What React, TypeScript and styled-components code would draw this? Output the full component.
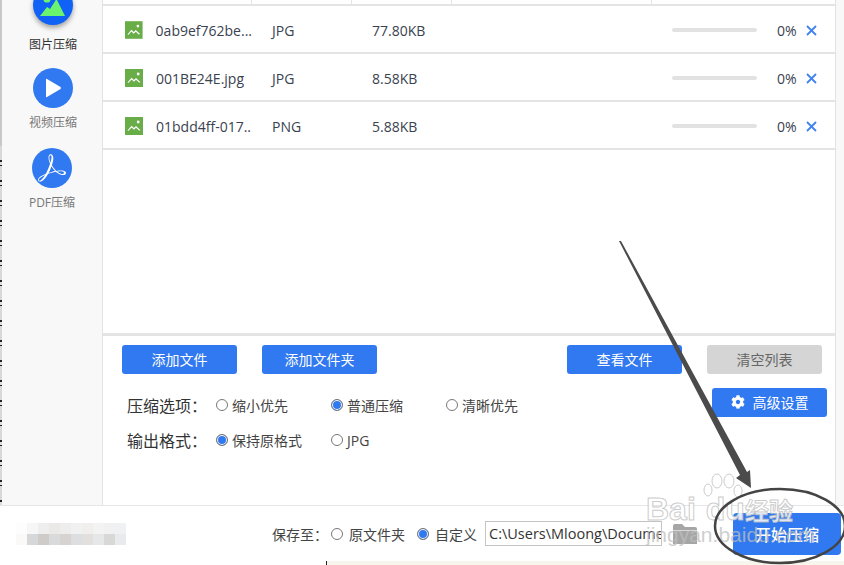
import React from 'react';
import styled, { createGlobalStyle } from 'styled-components';
import { FaCog } from 'react-icons/fa';
import { SiAdobeacrobatreader } from 'react-icons/si';

const GlobalStyle = createGlobalStyle`
  html, body {
    margin: 0;
    padding: 0;
    background: #fff;
  }
  * {
    box-sizing: border-box;
  }
`

const Page = styled.div`
  position: relative;
  display: flex;
  flex-flow: column nowrap;
  width: 844px;
  height: 565px;
  overflow: hidden;
  background: #fff;
  color: #333;
  font-family: "Open Sans", "Noto Sans CJK SC", sans-serif;
  font-size: 14px;
`

const Upper = styled.div`
  display: flex;
  flex: 1 1 auto;
  min-height: 0;
`

const EdgeStrip = styled.div`
  flex: 0 0 2px;
  background:
    linear-gradient(#c8c8c8 0 146px, transparent 146px),
    repeating-linear-gradient(#222 0 2px, #ddd 2px 5px, #222 5px 6px, #d8d8d8 6px 20px);
`

const Sidebar = styled.nav`
  display: flex;
  flex-flow: column nowrap;
  flex: 0 0 100px;
  background: #f8f8f8;
`

const NavItem = styled.div<{ $top: number; $left: number }>`
  display: flex;
  flex-flow: column nowrap;
  align-items: center;
  width: 40px;
  margin-top: ${(p) => p.$top}px;
  margin-left: ${(p) => p.$left}px;
`

const NavCircle = styled.div<{ $active?: boolean }>`
  display: flex;
  justify-content: center;
  align-items: center;
  flex: 0 0 40px;
  width: 40px;
  border-radius: 50%;
  background: ${(p) => (p.$active ? '#0f62f5' : '#3179f0')};
  box-shadow: ${(p) => (p.$active ? '0 3px 5px rgba(0, 0, 0, 0.35)' : 'none')};
  color: #fff;
`

const NavLabel = styled.span<{ $active?: boolean }>`
  margin-top: ${(p) => (p.$active ? 12 : 7)}px;
  font-size: 12px;
  line-height: 16px;
  white-space: nowrap;
  color: ${(p) => (p.$active ? '#333' : '#777')};
`

const Main = styled.main`
  display: flex;
  flex-flow: column nowrap;
  flex: 0 0 734px;
  background: #fff;
  border-left: 1px solid #e2e2e2;
  border-right: 1px solid #e2e2e2;
`

const Gutter = styled.div`
  flex: 1 1 auto;
  background: #f8f8f8;
`

const FileList = styled.section`
  flex: 0 0 336px;
  border-bottom: 3px solid #e4e4e4;
`

const HeaderRow = styled.div`
  display: grid;
  grid-template-columns: 149px 100px 100px 200px 1fr;
  height: 6px;
  border-bottom: 2px solid #e4e4e4;
`

const HeaderCell = styled.div`
  border-right: 1px solid #e4e4e4;
  &:last-child {
    border-right: 0;
  }
`

const FileRow = styled.div`
  display: grid;
  grid-template-columns: 149px 100px 100px 200px 1fr;
  align-items: center;
  height: 48px;
  padding-top: 2px;
  border-bottom: 2px solid #e4e4e4;
  color: #3a4250;
`

const NameCell = styled.div`
  display: flex;
  align-items: center;
  padding-left: 22px;
  gap: 13px;
  white-space: nowrap;
`

const TextCell = styled.div`
  padding-left: 20px;
`

const StatusCell = styled.div`
  grid-column: 5;
  display: flex;
  align-items: center;
  padding-left: 20px;
`

const ProgressTrack = styled.div`
  width: 85px;
  height: 4px;
  margin-right: 20px;
  border-radius: 2px;
  background: #e2e2e2;
`

const Percent = styled.span`
  display: block;
  width: 29px;
`

const Controls = styled.section`
  display: flex;
  flex-flow: column nowrap;
  flex: 1 1 auto;
  padding: 9px 8px 0 19px;
`

const ButtonRow = styled.div`
  display: flex;
  gap: 25px;
  padding-right: 5px;
`

const Spacer = styled.div`
  flex: 1 1 auto;
`

const ActionButton = styled.button<{ $muted?: boolean }>`
  display: flex;
  justify-content: center;
  align-items: center;
  gap: 8px;
  width: 115px;
  height: 29px;
  padding: 0 0 2px;
  border: 0;
  border-radius: 3px;
  background: ${(p) => (p.$muted ? '#d5d5d5' : '#3179f0')};
  color: ${(p) => (p.$muted ? '#666' : '#fff')};
  font: inherit;
`

const OptionsArea = styled.div`
  display: flex;
  justify-content: space-between;
  padding-top: 14px;
`

const OptionsColumn = styled.div`
  display: flex;
  flex-flow: column nowrap;
  gap: 11px;
  padding: 5px 0 0 5px;
`

const OptionRow = styled.div`
  display: flex;
  align-items: center;
  height: 24px;
`

const OptionTitle = styled.span`
  flex: 0 0 89px;
  font-size: 16px;
  color: #333;
`

const RadioItem = styled.label<{ $width?: number; $gap?: number }>`
  display: flex;
  align-items: center;
  gap: ${(p) => p.$gap ?? 4}px;
  width: ${(p) => (p.$width ? `${p.$width}px` : 'auto')};
  color: #444;
  font-size: 14px;
  white-space: nowrap;
`

const RadioDot = styled.span<{ $checked?: boolean }>`
  display: block;
  flex: 0 0 12px;
  width: 12px;
  height: 12px;
  border: 1px solid #777;
  border-radius: 50%;
  background: ${(p) => (p.$checked ? '#3179f0' : '#fff')};
  box-shadow: ${(p) => (p.$checked ? 'inset 0 0 0 1px #fff' : 'none')};
`

const Footer = styled.footer`
  display: flex;
  align-items: center;
  flex: 0 0 56px;
  padding: 0 3px 0 16px;
  background: #fff;
  border-top: 1px solid #e6e6e6;
`

const Mosaic = styled.div`
  display: grid;
  grid-template-columns: repeat(10, 11px);
  grid-auto-rows: 11px;
  margin-top: 1px;
`

const MosaicTile = styled.div<{ $color: string }>`
  background: ${(p) => p.$color};
`

const SaveArea = styled.div`
  display: flex;
  align-items: center;
  margin-left: 146px;
`

const SaveLabel = styled.span`
  margin-right: 3px;
  color: #444;
  font-size: 14px;
`

const PathInput = styled.div`
  width: 177px;
  height: 25px;
  margin-left: 8px;
  padding-left: 3px;
  overflow: hidden;
  border: 1px solid #c4c4c4;
  color: #333;
  font-size: 14.5px;
  line-height: 23px;
  white-space: nowrap;
`

const FolderButton = styled.div`
  display: flex;
  width: 24px;
  margin-left: 11px;
`

const StartButton = styled.button`
  width: 108px;
  height: 42px;
  margin-left: auto;
  padding: 0;
  border: 0;
  border-radius: 4px;
  background: #3179f0;
  color: #fff;
  font: inherit;
  font-size: 16px;
  font-weight: 500;
`

const BottomEdge = styled.div`
  display: flex;
  flex: 0 0 4px;
`

const EdgeWhite = styled.div`
  flex: 0 0 327px;
  background: #fff;
  border-right: 1px solid #222;
`

const EdgeCream = styled.div`
  flex: 1 1 auto;
  background: #f8f5ec;
`

const Annotation = styled.svg`
  position: absolute;
  top: 0;
  left: 0;
  pointer-events: none;
`

const Watermark = styled.div`
  position: absolute;
  top: 492px;
  left: 646px;
  width: 175px;
  pointer-events: none;
  color: rgba(255, 255, 255, 0.85);
  -webkit-text-stroke: 1px rgba(190, 190, 190, 0.8);
  font-family: "Liberation Sans", sans-serif;
  white-space: nowrap;
`

const WatermarkTop = styled.div`
  display: flex;
  align-items: baseline;
  font-size: 32px;
  font-weight: 700;
  line-height: 34px;
`

const WatermarkPad = styled.span`
  margin-left: 10px;
`

const WatermarkCn = styled.span`
  font-family: "Noto Sans CJK SC", sans-serif;
  font-size: 24px;
`

const WatermarkUrl = styled.div`
  font-size: 21px;
  line-height: 16px;
  -webkit-text-stroke: 0;
  color: rgba(190, 190, 190, 0.75);
`

const files = [
  { name: '0ab9ef762be...', type: 'JPG', size: '77.80KB' },
  { name: '001BE24E.jpg', type: 'JPG', size: '8.58KB' },
  { name: '01bdd4ff-017..', type: 'PNG', size: '5.88KB' },
]

const mosaicColors = [
  '#fdfdfd', '#f6f6f6', '#eeeeee', '#ebe9e8', '#ededed', '#f1f1f1', '#f0efee', '#f3f3f3', '#f1f1f1', '#f0f1f2',
  '#fbf9f7', '#d6d7d9', '#cfcbc8', '#d8dadc', '#d6d3d0', '#dcdee0', '#e2e0de', '#e6e7e8', '#d8d8d6', '#e8eaec',
]

function FileIcon() {
  return (
    <svg width="18" height="18" viewBox="0 0 18 18">
      <rect width="18" height="18" fill="#69ad48" />
      <circle cx="13.2" cy="5" r="1.4" fill="#fff" />
      <path d="M2.5 13.5 L6.5 8.8 L9 11 L11 9 L15.5 13.2 L14 13.6 L11 10.8 L9 12.8 L6.5 10.6 L3.6 13.8 Z" fill="#fff" />
    </svg>
  )
}

function CloseIcon() {
  return (
    <svg width="11" height="11" viewBox="0 0 11 11">
      <path d="M1 1 L10 10 M10 1 L1 10" stroke="#3f82f0" strokeWidth="1.8" fill="none" />
    </svg>
  )
}

function App() {
  return (
    <Page>
      <GlobalStyle />
      <Upper>
        <EdgeStrip />
        <Sidebar>
          <NavItem $top={-15} $left={31}>
            <NavCircle $active>
              <svg width="26" height="24" viewBox="0 0 26 24">
                <circle cx="7" cy="6" r="3.6" fill="#6bf56e" />
                <path d="M0 23 L7 14 L10 16 L16.5 6 L25 23 Z" fill="#6bf56e" />
              </svg>
            </NavCircle>
            <NavLabel $active>图片压缩</NavLabel>
          </NavItem>
          <NavItem $top={15} $left={31}>
            <NavCircle>
              <svg width="18" height="20" viewBox="0 0 18 20">
                <path d="M2 1.5 Q2 0.5 3 1 L16.5 9 Q17.5 10 16.5 11 L3 19 Q2 19.5 2 18.5 Z" fill="#fff" />
              </svg>
            </NavCircle>
            <NavLabel>视频压缩</NavLabel>
          </NavItem>
          <NavItem $top={17} $left={30}>
            <NavCircle>
              <SiAdobeacrobatreader size={28} />
            </NavCircle>
            <NavLabel>PDF压缩</NavLabel>
          </NavItem>
        </Sidebar>
        <Main>
          <FileList>
            <HeaderRow>
              <HeaderCell />
              <HeaderCell />
              <HeaderCell />
              <HeaderCell />
              <HeaderCell />
            </HeaderRow>
            {files.map((file) => (
              <FileRow key={file.name}>
                <NameCell>
                  <FileIcon />
                  <span>{file.name}</span>
                </NameCell>
                <TextCell>{file.type}</TextCell>
                <TextCell>{file.size}</TextCell>
                <StatusCell>
                  <ProgressTrack />
                  <Percent>0%</Percent>
                  <CloseIcon />
                </StatusCell>
              </FileRow>
            ))}
          </FileList>
          <Controls>
            <ButtonRow>
              <ActionButton>添加文件</ActionButton>
              <ActionButton>添加文件夹</ActionButton>
              <Spacer />
              <ActionButton>查看文件</ActionButton>
              <ActionButton $muted>清空列表</ActionButton>
            </ButtonRow>
            <OptionsArea>
              <OptionsColumn>
                <OptionRow>
                  <OptionTitle>压缩选项：</OptionTitle>
                  <RadioItem $width={115}><RadioDot />缩小优先</RadioItem>
                  <RadioItem $width={115}><RadioDot $checked />普通压缩</RadioItem>
                  <RadioItem $width={115}><RadioDot />清晰优先</RadioItem>
                </OptionRow>
                <OptionRow>
                  <OptionTitle>输出格式：</OptionTitle>
                  <RadioItem $width={115}><RadioDot $checked />保持原格式</RadioItem>
                  <RadioItem $width={115}><RadioDot />JPG</RadioItem>
                </OptionRow>
              </OptionsColumn>
              <ActionButton>
                <FaCog size={14} />
                高级设置
              </ActionButton>
            </OptionsArea>
          </Controls>
        </Main>
        <Gutter />
      </Upper>
      <Footer>
        <Mosaic>
          {mosaicColors.map((color, i) => (
            <MosaicTile key={i} $color={color} />
          ))}
        </Mosaic>
        <SaveArea>
          <SaveLabel>保存至：</SaveLabel>
          <RadioItem $width={86} $gap={6}><RadioDot />原文件夹</RadioItem>
          <RadioItem $gap={6}><RadioDot $checked />自定义</RadioItem>
          <PathInput>C:\Users\Mloong\Documents</PathInput>
          <FolderButton>
            <svg width="24" height="20" viewBox="0 0 24 20">
              <path d="M0 2 Q0 0 2 0 L9 0 L12 3 L22 3 Q24 3 24 5 L24 20 L0 20 Z" fill="#a6a6a6" />
              <rect x="0" y="6" width="24" height="1" fill="#d8d8d8" />
            </svg>
          </FolderButton>
        </SaveArea>
        <StartButton>开始压缩</StartButton>
      </Footer>
      <BottomEdge>
        <EdgeWhite />
        <EdgeCream />
      </BottomEdge>
      <Annotation width="844" height="565" viewBox="0 0 844 565">
        <g fill="rgba(255,255,255,0.5)" stroke="rgba(190,190,190,0.8)">
          <ellipse cx="708" cy="490" rx="4" ry="6" />
          <ellipse cx="717" cy="481" rx="5" ry="7" />
          <ellipse cx="729" cy="481" rx="5" ry="7" />
          <ellipse cx="738" cy="491" rx="4" ry="6" />
        </g>
      </Annotation>
      <Watermark>
        <WatermarkTop>
          Bai
          <WatermarkPad>du</WatermarkPad>
          <WatermarkCn>经验</WatermarkCn>
        </WatermarkTop>
        <WatermarkUrl>jingyan.baidu.com</WatermarkUrl>
      </Watermark>
      <Annotation width="844" height="565" viewBox="0 0 844 565">
        <path d="M619 241 L621 241 L747 472 L750 470 L751 488 L736 478 L740 475 Z" fill="#4b4b4b" />
        <ellipse cx="780" cy="526" rx="65" ry="37" fill="none" stroke="#444" strokeWidth="2.5" />
      </Annotation>
    </Page>
  );
}

export default App;
